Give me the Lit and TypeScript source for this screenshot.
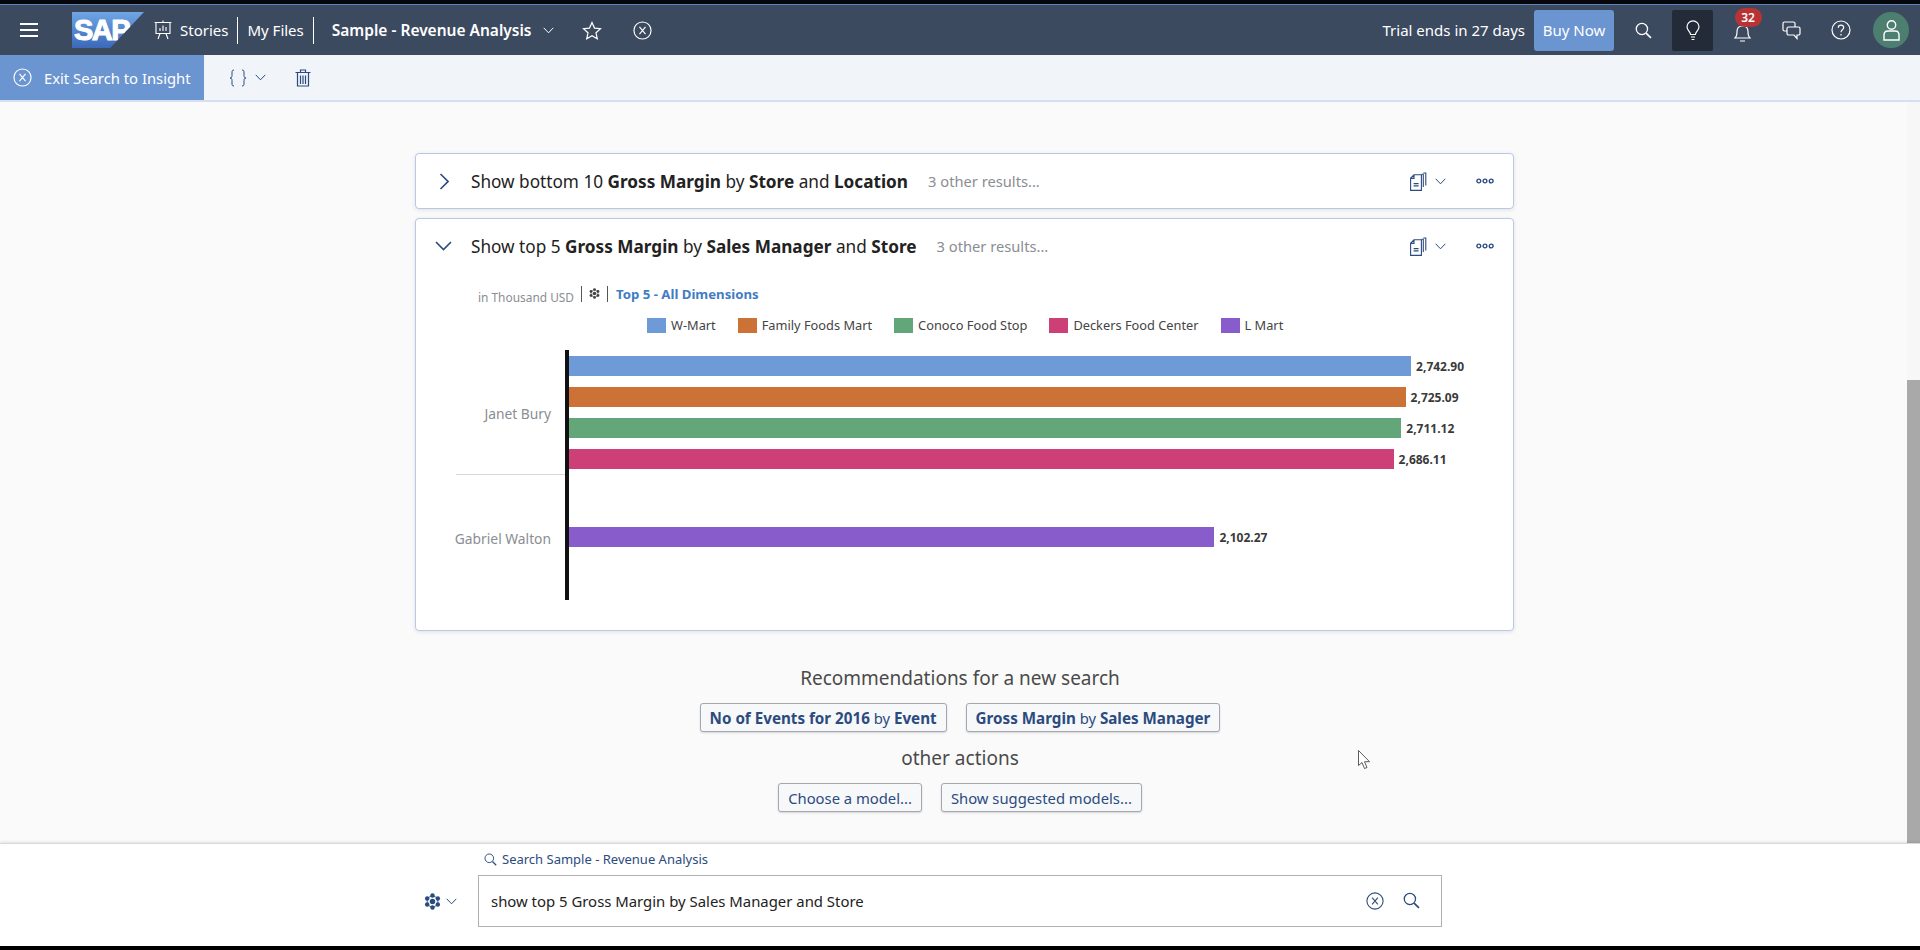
import { html, LitElement, css } from 'lit';
import { customElement } from 'lit/decorators.js';

const xCircle = (size: number) => html`<svg width=${size} height=${size} viewBox="0 0 20 20" fill="none" stroke="currentColor" stroke-width="1.2"><circle cx="10" cy="10" r="9"/><path d="M6.8 6.2 13.2 13.8M13.2 6.2 6.8 13.8"/></svg>`;
const chevDown = (w = 11) => html`<svg width=${w} height="7" viewBox="0 0 11 7" fill="none" stroke="currentColor" stroke-width="1"><path d="M.7.8 5.5 5.8 10.3.8"/></svg>`;
const searchIcon = (size: number) => html`<svg width=${size} height=${size} viewBox="0 0 16 16" fill="none" stroke="currentColor" stroke-width="1.2"><circle cx="6.5" cy="6.5" r="5.3"/><path d="m10.4 10.4 4.6 4.6" stroke-width="1.6"/></svg>`;
const cube = (size: number) => html`<svg width=${size} height=${size} viewBox="0 0 16 16" fill="currentColor"><path d="M8 2.2 13 5v6l-5 2.8L3 11V5Z" fill="none" stroke="currentColor" stroke-width=".8"/><circle cx="8" cy="2.3" r="2.1"/><circle cx="13" cy="5.1" r="2.1"/><circle cx="13" cy="10.9" r="2.1"/><circle cx="8" cy="13.7" r="2.1"/><circle cx="3" cy="10.9" r="2.1"/><circle cx="3" cy="5.1" r="2.1"/><circle cx="8" cy="8" r="2.6"/></svg>`;
const copyIcon = html`<svg width="17" height="19" viewBox="0 0 17 19" fill="none" stroke="#2b4b7e" stroke-width="1.1"><path d="M.6 6.2 4 2.8h7.4v15.6H.6ZM4 3v3.4H.8M11.5 2.2h1.800V15M13.4 1h2.400v12.4"/><path d="M3.6 11.6h5M3.6 13.8h5" stroke-width="1.3"/></svg>`;
const dots = html`<svg width="18" height="6" viewBox="0 0 18 6" fill="none" stroke="#2b4b7e" stroke-width="1.4"><circle cx="2.8" cy="3" r="1.9"/><circle cx="9" cy="3" r="1.9"/><circle cx="15.2" cy="3" r="1.9"/></svg>`;

const legend = [
  { name: 'W-Mart', color: '#6f9ad8' },
  { name: 'Family Foods Mart', color: '#cc7236' },
  { name: 'Conoco Food Stop', color: '#62a679' },
  { name: 'Deckers Food Center', color: '#cc4077' },
  { name: 'L Mart', color: '#885ccb' },
];

const groups = [
  {
    name: 'Janet Bury',
    bars: [
      { value: 2742.9, color: '#6f9ad8' },
      { value: 2725.09, color: '#cc7236' },
      { value: 2711.12, color: '#62a679' },
      { value: 2686.11, color: '#cc4077' },
    ],
  },
  { name: 'Gabriel Walton', bars: [{ value: 2102.27, color: '#885ccb' }] },
];

const money = (v: number) => v.toLocaleString('en-US', { minimumFractionDigits: 2 });

@customElement('app-root')
export default class AppRoot extends LitElement {
  static styles = [
    css`
      :host {
        display: flex;
        flex-direction: column;
        height: 950px;
        overflow: hidden;
        position: relative;
        font-family: 'Noto Sans', 'Liberation Sans', sans-serif;
        background: #000;
        color: #222;
      }
      .strip {
        height: 4px;
        flex: none;
        background: #05070c;
        border-bottom: 1px solid #5b82bd;
      }
      header {
        height: 50px;
        flex: none;
        display: flex;
        align-items: center;
        background: #3c4a60;
        color: #fff;
        font-size: 15px;
        padding-right: 9px;
      }
      .burger {
        margin-left: 20px;
        width: 18px;
        height: 14px;
        border-top: 2px solid #fff;
        border-bottom: 2px solid #fff;
        position: relative;
        box-sizing: border-box;
      }
      .burger::after {
        content: '';
        position: absolute;
        left: 0;
        right: 0;
        top: 4px;
        height: 2px;
        background: #fff;
      }
      .logo {
        margin-left: 34px;
        width: 72px;
        height: 36px;
        background: linear-gradient(#6fa6e4, #3b68ba);
        clip-path: polygon(0 0, 100% 0, 53% 100%, 0 100%);
        color: #fff;
        font: 700 29px 'Liberation Sans', sans-serif;
        -webkit-text-stroke: 1px #fff;
        letter-spacing: -1.5px;
        line-height: 37px;
        padding-left: 2px;
        box-sizing: border-box;
      }
      .nav-ico {
        margin-left: 10px;
        margin-right: 8px;
        display: flex;
      }
      .sep {
        width: 1px;
        height: 27px;
        background: #fff;
        margin: 0 9px;
      }
      .story {
        font-weight: 600;
        font-size: 15.5px;
        margin-left: 9px;
      }
      .chev {
        display: flex;
        margin-left: 11px;
      }
      header .story + .chev {
        margin-left: 12px;
      }
      .ico-btn {
        display: flex;
      }
      .spacer {
        flex: 1;
      }
      .buy {
        margin-left: 9px;
        width: 80px;
        height: 41px;
        border-radius: 3px;
        background: #6a95d0;
        display: flex;
        align-items: center;
        justify-content: center;
      }
      .right-icons {
        display: grid;
        grid-template-columns: 58px 41px 58px 40px 60px 40px;
        align-items: center;
        justify-items: center;
        height: 41px;
      }
      .bulb {
        width: 41px;
        height: 41px;
        background: #232a38;
        border-radius: 2px;
        display: flex;
        align-items: center;
        justify-content: center;
      }
      .bell {
        position: relative;
        display: flex;
        margin-top: 6px;
      }
      .badge {
        position: absolute;
        left: 1px;
        top: -17px;
        width: 27px;
        height: 19px;
        border-radius: 10px;
        background: #b83333;
        font-size: 12px;
        font-weight: 600;
        line-height: 19px;
        text-align: center;
      }
      .avatar {
        width: 36px;
        height: 36px;
        border-radius: 50%;
        background: #4c7f70;
        display: flex;
        align-items: center;
        justify-content: center;
      }
      .toolbar {
        height: 47px;
        flex: none;
        display: flex;
        align-items: center;
        background: #f1f4f9;
        border-bottom: 2px solid #d5dff0;
        box-sizing: border-box;
        color: #2b4b7e;
      }
      .exit {
        width: 204px;
        height: 100%;
        box-sizing: border-box;
        padding-left: 13px;
        display: flex;
        align-items: center;
        gap: 12px;
        background: #6a95d0;
        color: #fff;
        font-size: 14.8px;
      }
      .braces {
        margin-left: 25px;
        display: flex;
      }
      .toolbar .chev {
        margin-left: 8px;
      }
      .trash {
        margin-left: 29px;
        display: flex;
      }
      .main {
        flex: 1;
        display: flex;
        min-height: 0;
        background: #fafafb;
      }
      .content {
        flex: 1;
        padding: 51px 0 0 415px;
      }
      .scrollbar {
        width: 13px;
        padding-top: 278px;
        box-sizing: border-box;
        background: #f7f7f8;
      }
      .thumb {
        height: 100%;
        background: #a9a9a9;
      }
      .card {
        width: 1099px;
        box-sizing: border-box;
        margin-bottom: 9px;
        background: #fff;
        border: 1px solid #b5c9e8;
        border-radius: 4px;
        box-shadow: 0 1px 4px rgba(0, 0, 0, 0.1);
      }
      .head {
        height: 54px;
        display: flex;
        align-items: center;
        padding: 0 19px;
        font-size: 17.2px;
      }
      .head-chev {
        width: 17px;
        margin-right: 19px;
        display: flex;
        justify-content: center;
        color: #2b4b7e;
      }
      .head b {
        font-weight: 700;
      }
      .others {
        margin-left: 20px;
        font-size: 14.7px;
        color: #8a8d92;
      }
      .copy {
        display: flex;
      }
      .head .chev {
        margin-left: 8px;
        margin-right: 30px;
        color: #2b4b7e;
      }
      .meta {
        display: flex;
        align-items: center;
        height: 17px;
        margin: 12px 0 0 62px;
      }
      .unit {
        font-size: 11.9px;
        color: #8a8d92;
        padding-top: 7px;
      }
      .meta-sep {
        width: 1px;
        height: 16px;
        background: #555;
        margin: 0 7px;
      }
      .meta-ico {
        display: flex;
        color: #444;
      }
      .meta-title {
        font-size: 13.2px;
        font-weight: 700;
        color: #427cc3;
        margin-left: 1px;
      }
      .legend {
        display: flex;
        margin: 15px 0 0 231px;
        height: 16px;
        align-items: center;
        font-size: 12.8px;
        color: #444;
      }
      .legend-item {
        display: flex;
        align-items: center;
        gap: 5px;
        margin-right: 22px;
      }
      .swatch {
        width: 19px;
        height: 15px;
      }
      .chart {
        margin: 17px 0 30px 40px;
      }
      .group {
        display: flex;
        height: 125px;
      }
      .cat {
        width: 109px;
        box-sizing: border-box;
        padding: 2px 14px 0 0;
        display: flex;
        align-items: center;
        justify-content: flex-end;
        font-size: 13.8px;
        color: #8a8d92;
        white-space: nowrap;
      }
      .group:first-child .cat {
        border-bottom: 1px solid #d9d9d9;
      }
      .bars {
        border-left: 4px solid #111;
        padding-top: 6px;
        display: flex;
        flex-direction: column;
        gap: 11px;
      }
      .group:last-child .bars {
        padding-top: 52px;
      }
      .bar-row {
        display: flex;
        align-items: center;
        height: 20px;
      }
      .bar {
        height: 20px;
      }
      .val {
        margin-left: 5px;
        font-size: 12px;
        font-weight: 700;
        color: #3a3a3a;
      }
      .recs {
        width: 1090px;
        display: flex;
        flex-direction: column;
        align-items: center;
        margin-top: 34px;
      }
      .recs h3 {
        margin: 0;
        font-size: 19px;
        line-height: 26px;
        font-weight: 400;
        color: #4a4a4a;
      }
      .btns {
        display: flex;
        gap: 19px;
        margin: 12px 0 13px;
      }
      .btn {
        height: 29px;
        box-sizing: border-box;
        padding: 0 9px;
        display: flex;
        align-items: center;
        white-space: pre;
        font-size: 14.8px;
        color: #2b4b7e;
        background: #f7f8fa;
        border: 1px solid #a4a8ae;
        border-radius: 3px;
        box-shadow: 0 1px 2px rgba(0, 0, 0, 0.15);
      }
      .btn b {
        font-weight: 700;
        font-size: 15.2px;
      }
      .bottom {
        height: 103px;
        flex: none;
        position: relative;
        box-sizing: border-box;
        background: #fff;
        border-top: 1px solid #d8d8d8;
        box-shadow: 0 -1px 3px rgba(0, 0, 0, 0.1);
        padding-left: 424px;
        display: flex;
        align-items: flex-end;
        color: #2b4b7e;
      }
      .model {
        display: flex;
        align-items: center;
        height: 52px;
        margin: 0 0 19px 0;
        width: 54px;
        gap: 5px;
        box-sizing: border-box;
      }
      .search-col {
        width: 964px;
        margin-bottom: 19px;
      }
      .search-label {
        display: flex;
        align-items: center;
        gap: 5px;
        font-size: 13px;
        margin: 0 0 7px 6px;
      }
      .input {
        height: 52px;
        box-sizing: border-box;
        border: 1px solid #b0b0b0;
        display: flex;
        align-items: center;
        padding: 0 21px 1px 12px;
        font-size: 14.9px;
        color: #222;
      }
      .input .spacer {
        flex: 1;
      }
      .input .act {
        display: flex;
        color: #2b4b7e;
        margin-left: 19px;
      }
      .foot {
        height: 4px;
        flex: none;
        background: #000;
        position: relative;
      }
      .cursor {
        position: absolute;
        left: 1358px;
        top: 750px;
      }
    `,
  ];

  renderHead(open: boolean, title: unknown) {
    return html`
      <div class="head">
        <span class="head-chev">
          ${open
            ? html`<svg width="17" height="10" viewBox="0 0 17 10" fill="none" stroke="currentColor" stroke-width="1.6"><path d="m1 1 7.5 7.5L16 1"/></svg>`
            : html`<svg width="10" height="17" viewBox="0 0 10 17" fill="none" stroke="currentColor" stroke-width="1.6"><path d="m1.5 1 7.5 7.5L1.5 16"/></svg>`}
        </span>
        <span>${title}</span>
        <span class="others">3 other results...</span>
        <span class="spacer"></span>
        <span class="copy">${copyIcon}</span>
        <span class="chev">${chevDown()}</span>
        ${dots}
      </div>
    `;
  }

  renderChart() {
    return html`
      <div class="chart">
        ${groups.map(
          (g) => html`
            <div class="group">
              <div class="cat">${g.name}</div>
              <div class="bars">
                ${g.bars.map(
                  (b) => html`
                    <div class="bar-row">
                      <div class="bar" style="width:${(b.value * 0.307).toFixed(1)}px;background:${b.color}"></div>
                      <span class="val">${money(b.value)}</span>
                    </div>
                  `,
                )}
              </div>
            </div>
          `,
        )}
      </div>
    `;
  }

  render() {
    return html`
      <div class="strip"></div>
      <header>
        <div class="burger"></div>
        <div class="logo">SAP</div>
        <span class="nav-ico">
          <svg width="18" height="20" viewBox="0 0 18 20" fill="none" stroke="#fff" stroke-width="1.1"><path d="M.6 2.5h16.8M2 2.5v11h14v-11M9 .5v2M6 13.5 4 19M12 13.5l2 5.5"/><path d="M6 11V8M9 11V5.5M12 11V7"/></svg>
        </span>
        <span>Stories</span>
        <span class="sep"></span>
        <span>My Files</span>
        <span class="sep"></span>
        <span class="story">Sample - Revenue Analysis</span>
        <span class="chev">${chevDown()}</span>
        <span class="ico-btn" style="margin-left:28px">
          <svg width="20" height="19" viewBox="0 0 20 19" fill="none" stroke="#fff" stroke-width="1.2"><path d="m10 1.5 2.5 5.6 6 .6-4.5 4.1 1.3 6L10 14.7l-5.3 3.1 1.3-6-4.5-4.1 6-.6Z"/></svg>
        </span>
        <span class="ico-btn" style="margin-left:31px">${xCircle(19)}</span>
        <span class="spacer"></span>
        <span>Trial ends in 27 days</span>
        <div class="buy">Buy Now</div>
        <div class="right-icons">
          ${searchIcon(17)}
          <div class="bulb">
            <svg width="14" height="21" viewBox="0 0 14 21" fill="none" stroke="#fff" stroke-width="1.2"><path d="M4.6 14.5C4.4 11.5 1 10.5 1 6.8a6 6 0 0 1 12 0c0 3.7-3.4 4.7-3.6 7.7ZM5 17h4M5.6 19.5h2.8"/></svg>
          </div>
          <div class="bell">
            <svg width="17" height="17" viewBox="0 0 17 17" fill="none" stroke="#fff" stroke-width="1.2"><path d="M1 13c1.8-1.5 2-3 2-6.5C3 3 5 1 8.5 1S14 3 14 6.5c0 3.5.2 5 2 6.500ZM6 16h5"/></svg>
            <span class="badge">32</span>
          </div>
          <svg width="19" height="19" viewBox="0 0 19 19" fill="none" stroke="#fff" stroke-width="1.2"><path d="M13 6V2.5A1.5 1.5 0 0 0 11.500 1h-9A1.5 1.5 0 0 0 1 2.5v6A1.5 1.5 0 0 0 2.5 10H5"/><path d="M6.5 6h10A1.5 1.5 0 0 1 18 7.5v5a1.5 1.5 0 0 1-1.500 1.500H15v3.500L12 14H6.500A1.5 1.5 0 0 1 5 12.500v-5A1.5 1.5 0 0 1 6.500 6Z"/></svg>
          <svg width="20" height="20" viewBox="0 0 20 20" fill="none" stroke="#fff" stroke-width="1.2"><circle cx="10" cy="10" r="9"/><path d="M7.3 7.8C7.3 6.2 8.5 5.2 10 5.2s2.7 1 2.7 2.4c0 2.2-2.7 2.2-2.7 4.6M10 14v1.5"/></svg>
          <div class="avatar">
            <svg width="17" height="21" viewBox="0 0 17 21" fill="none" stroke="#fff" stroke-width="1.4"><circle cx="8.5" cy="5" r="4.2"/><path d="M1 20v-5c0-2.5 1.5-4 4-4h7c2.500 0 4 1.500 4 4v5Z"/></svg>
          </div>
        </div>
      </header>
      <div class="toolbar">
        <div class="exit">${xCircle(19)}<span>Exit Search to Insight</span></div>
        <span class="braces">
          <svg width="18" height="18" viewBox="0 0 18 18" fill="none" stroke="#2b4b7e" stroke-width="1"><path d="M5 1C3 1 3 2 3 4v2.5C3 8 2.5 9 1 9c1.5 0 2 1 2 2.5V14c0 2 0 3 2 3M13 1c2 0 2 1 2 3v2.500c0 1.500.5 2.500 2 2.500-1.500 0-2 1-2 2.500V14c0 2 0 3-2 3"/></svg>
        </span>
        <span class="chev">${chevDown()}</span>
        <span class="trash">
          <svg width="16" height="18" viewBox="0 0 16 18" fill="none" stroke="#2b4b7e" stroke-width="1.2"><path d="M.5 3.5h15M5.5 3V1h5v2M2.5 3.5V17h11V3.5M5.5 6.5V15M8 6.5V15M10.5 6.5V15"/></svg>
        </span>
      </div>
      <div class="main">
        <div class="content">
          <div class="card">
            ${this.renderHead(false, html`Show bottom 10 <b>Gross Margin</b> by <b>Store</b> and <b>Location</b>`)}
          </div>
          <div class="card">
            ${this.renderHead(true, html`Show top 5 <b>Gross Margin</b> by <b>Sales Manager</b> and <b>Store</b>`)}
            <div class="meta">
              <span class="unit">in Thousand USD</span>
              <span class="meta-sep"></span>
              <span class="meta-ico">${cube(11)}</span>
              <span class="meta-sep"></span>
              <span class="meta-title">Top 5 - All Dimensions</span>
            </div>
            <div class="legend">
              ${legend.map(
                (l) => html`
                  <span class="legend-item">
                    <span class="swatch" style="background:${l.color}"></span>${l.name}
                  </span>
                `,
              )}
            </div>
            ${this.renderChart()}
          </div>
          <div class="recs">
            <h3>Recommendations for a new search</h3>
            <div class="btns">
              <span class="btn"><b>No of Events for 2016</b> by <b>Event</b></span>
              <span class="btn"><b>Gross Margin</b> by <b>Sales Manager</b></span>
            </div>
            <h3>other actions</h3>
            <div class="btns">
              <span class="btn">Choose a model...</span>
              <span class="btn">Show suggested models...</span>
            </div>
          </div>
        </div>
        <div class="scrollbar"><div class="thumb"></div></div>
      </div>
      <div class="bottom">
        <div class="model">${cube(17)}${chevDown()}</div>
        <div class="search-col">
          <div class="search-label">${searchIcon(13)}<span>Search Sample - Revenue Analysis</span></div>
          <div class="input">
            <span>show top 5 Gross Margin by Sales Manager and Store</span>
            <span class="spacer"></span>
            <span class="act">${xCircle(18)}</span>
            <span class="act">${searchIcon(17)}</span>
          </div>
        </div>
      </div>
      <div class="foot"></div>
      <svg class="cursor" width="13" height="20" viewBox="0 0 13 20" fill="#fff" stroke="#333" stroke-width="0.8"><path d="M.5.5v15l3.5-3 2.5 6 2.5-1-2.500-5.800h5Z"/></svg>
    `;
  }
}
